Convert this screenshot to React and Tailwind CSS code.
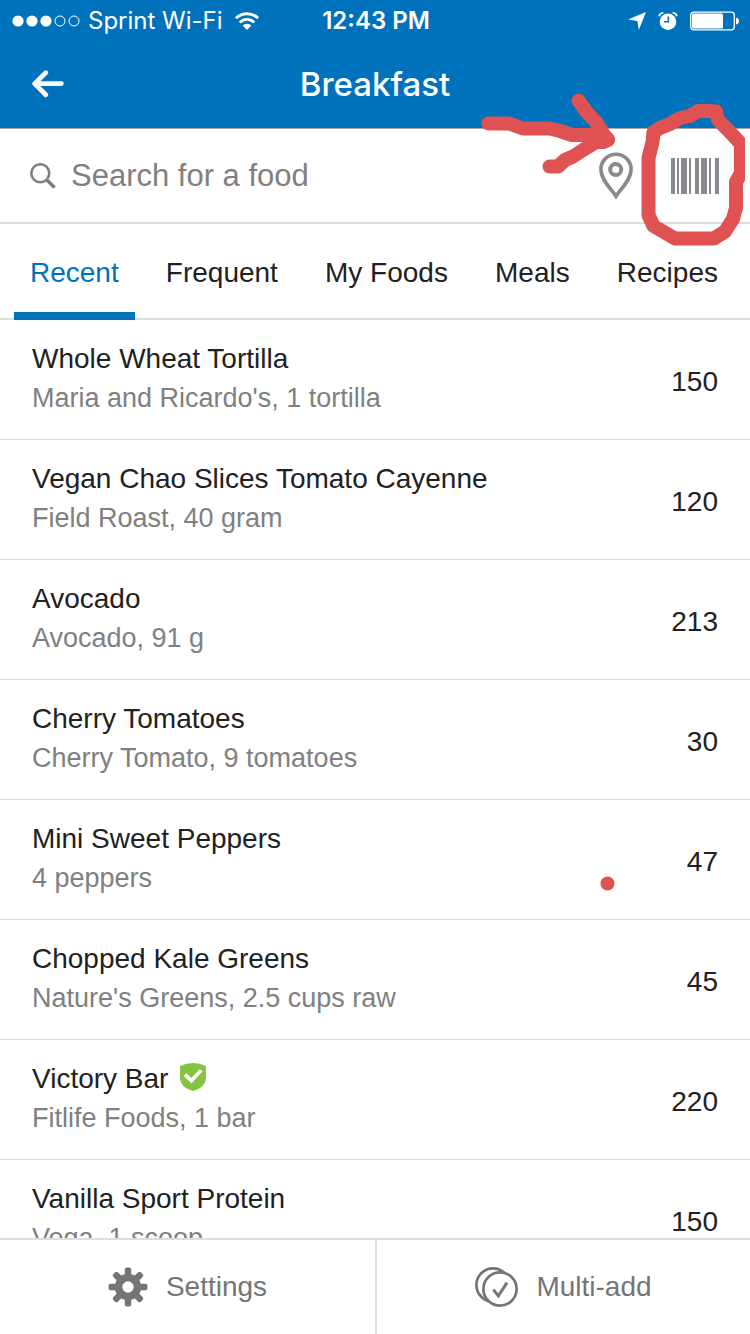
import React, { useState } from "react";
import clsx from "clsx";

const TABS = ["Recent", "Frequent", "My Foods", "Meals", "Recipes"];

const FOODS = [
  { name: "Whole Wheat Tortilla", detail: "Maria and Ricardo's, 1 tortilla", calories: 150 },
  { name: "Vegan Chao Slices Tomato Cayenne", detail: "Field Roast, 40 gram", calories: 120 },
  { name: "Avocado", detail: "Avocado, 91 g", calories: 213 },
  { name: "Cherry Tomatoes", detail: "Cherry Tomato, 9 tomatoes", calories: 30 },
  { name: "Mini Sweet Peppers", detail: "4 peppers", calories: 47 },
  { name: "Chopped Kale Greens", detail: "Nature's Greens, 2.5 cups raw", calories: 45 },
  { name: "Victory Bar", detail: "Fitlife Foods, 1 bar", calories: 220, verified: true },
  { name: "Vanilla Sport Protein", detail: "Vega, 1 scoop", calories: 150 },
];

const SignalDots = () => (
  <svg width="68" height="12" viewBox="0 0 68 12" aria-hidden="true">
    {[0, 1, 2].map((i) => (
      <circle key={i} cx={6 + i * 14} cy="6" r="5.6" fill="#fff" />
    ))}
    {[3, 4].map((i) => (
      <circle key={i} cx={6 + i * 14} cy="6" r="5" fill="none" stroke="#fff" />
    ))}
  </svg>
);

const WifiIcon = () => (
  <svg width="24" height="18" viewBox="0 0 24 18" fill="none" stroke="#fff" aria-hidden="true">
    <path d="M1 6.2a15.6 15.6 0 0 1 22 0" strokeWidth="3" />
    <path d="M4.8 10.4a10.2 10.2 0 0 1 14.4 0" strokeWidth="2.8" />
    <path d="M12 18l-4.4-4.5a6.3 6.3 0 0 1 8.8 0z" fill="#fff" stroke="none" />
  </svg>
);

const LocationIcon = () => (
  <svg width="18" height="18" viewBox="0 0 18 18" fill="#fff" aria-hidden="true">
    <path d="M18 0L10.8 18L9.4 8.9L0 7.6z" />
  </svg>
);

const AlarmIcon = () => (
  <svg width="20" height="18" viewBox="0 0 20 18" aria-hidden="true">
    <circle cx="10" cy="9.7" r="8.3" fill="#fff" />
    <path d="M1 4.2Q2 1 5.4 .8M19 4.2Q18 1 14.6 .8" fill="none" stroke="#fff" strokeWidth="1.6" />
    <path d="M10.3 4.4v5.4H6" fill="none" stroke="#0072bc" strokeWidth="1.6" />
  </svg>
);

const BatteryIcon = () => (
  <svg width="50" height="20" viewBox="0 0 50 20" aria-hidden="true">
    <rect x=".7" y="1.2" width="43.6" height="17.6" rx="3" fill="none" stroke="#fff" strokeWidth="1.3" />
    <rect x="2" y="2.6" width="31" height="14.8" rx="1.5" fill="#fff" />
    <path d="M46 6.6q3 .8 3 3.4t-3 3.4z" fill="#fff" />
  </svg>
);

const BackIcon = () => (
  <svg
    width="32"
    height="28"
    viewBox="0 0 32 28"
    fill="none"
    stroke="#f7f7f7"
    strokeWidth="4.8"
    strokeLinecap="round"
    strokeLinejoin="round"
    aria-hidden="true"
  >
    <path d="M13.7 2.7L2.7 13.6L13.7 24.8M3 13.6h26.4" />
  </svg>
);

const SearchIcon = () => (
  <svg width="26" height="26" viewBox="0 0 26 26" fill="none" stroke="#808080" role="img" aria-label="Search for a food">
    <circle cx="10.3" cy="10.3" r="9" strokeWidth="2.6" />
    <path d="M16.8 17L24.6 24.5" strokeWidth="3.6" />
  </svg>
);

const PinIcon = () => (
  <svg width="34" height="47" viewBox="0 0 34 47" fill="none" stroke="#8a8a8e" aria-hidden="true">
    <path d="M17 44.2C13.4 38 1.9 28.5 1.9 17.3a15.1 15.1 0 0 1 30.2 0C32.1 28.5 20.6 38 17 44.2z" strokeWidth="3.6" />
    <circle cx="16.7" cy="17.5" r="5.5" strokeWidth="4" />
  </svg>
);

// [offset, width] of each bar
const BARS = [[0, 4], [6, 2], [10, 6], [18, 2], [24, 4], [30, 6], [38, 2], [44, 4]];

const BarcodeIcon = () => (
  <svg width="48" height="36" viewBox="0 0 48 36" fill="#8a8a8e" aria-hidden="true">
    {BARS.map(([x, w]) => (
      <rect key={x} x={x} y="0" width={w} height="36" />
    ))}
  </svg>
);

const VerifiedIcon = () => (
  <svg width="26" height="28" viewBox="0 0 26 28" role="img" aria-label="Verified">
    <path d="M0 3Q6.5 0 13 0T26 3V14.5Q26 24 13 28Q0 24 0 14.5z" fill="#85c441" />
    <path d="M5 11.6L11.4 17.6L21.2 7.2" fill="none" stroke="#fff" strokeWidth="3.6" />
  </svg>
);

const GearIcon = () => (
  <svg width="40" height="40" viewBox="-20 -20 40 40" aria-hidden="true">
    {[0, 45, 90, 135].map((deg) => (
      <rect
        key={deg}
        x="-3.2"
        y="-19.5"
        width="6.4"
        height="39"
        rx="2"
        fill="#757575"
        transform={`rotate(${deg})`}
      />
    ))}
    <circle r="13.2" fill="#757575" />
    <circle r="5.7" fill="#fff" />
  </svg>
);

const MultiAddIcon = () => (
  <svg width="43" height="40" viewBox="0 0 43 40" fill="#fff" stroke="#757575" strokeWidth="2.7" aria-hidden="true">
    <circle cx="18" cy="18" r="16.6" />
    <circle cx="25" cy="22" r="16.6" />
    <path d="M18.4 22.6L23.3 29L32 15.6" fill="none" strokeWidth="3" />
  </svg>
);

// red pen marks drawn over the screen
const PenMarks = () => (
  <svg
    className="pointer-events-none absolute top-0 right-[5px] z-10"
    width="275"
    height="900"
    viewBox="470 0 275 900"
    fill="none"
    stroke="#e05252"
    strokeWidth="14"
    strokeLinecap="round"
    strokeLinejoin="round"
    aria-hidden="true"
  >
    <path d="M488.5 123.5H509L523 128.5H550L560 131L572 135H602L608 139" />
    <path d="M578.5 100.500L586.5 112L596 122L601.5 131L608 140L603 142H596L583 150L573 156.5L565 160L558 166.5H549.5" />
    <path d="M601 130L599 136" />
    <path d="M716 111.5L708 111H698L690 116L680 118L670 124L660 128L653.5 132L652.500 142L648.500 158V215L653.500 226L663 231.500L675 238.500H714L725 231.500L733 219L736 208V182L741 173V144L728 130L718 120L716 111.5" />
    <circle cx="607.5" cy="883.5" r="7" fill="#e05252" stroke="none" />
  </svg>
);

const StatusBar = () => (
  <div className="grid h-10 grid-cols-[1fr_auto_1fr] items-center pt-0.5 pr-2.5 pl-3 text-2xl [font-family:Inter,sans-serif]">
    <div className="flex items-center gap-2">
      <SignalDots />
      <span>Sprint Wi-Fi</span>
      <span className="pl-1">
        <WifiIcon />
      </span>
    </div>
    <span className="font-semibold">12:43 PM</span>
    <div className="flex items-center justify-end gap-3">
      <LocationIcon />
      <AlarmIcon />
      <BatteryIcon />
    </div>
  </div>
);

const FoodRow = ({ food }) => (
  <li className="border-b border-[#dcdcdc]">
    <button type="button" className="flex h-[119px] w-full items-center justify-between px-8 text-left">
      <span className="pb-0.5">
        <span className="flex h-10 items-center gap-3 text-[28px] text-[#212121]">
          {food.name}
          {food.verified && (
            <span className="pb-1">
              <VerifiedIcon />
            </span>
          )}
        </span>
        <span className="block h-10 text-[27px] leading-[38px] text-[#808080]">{food.detail}</span>
      </span>
      <span className="pt-1 text-[28px] text-[#212121]">{food.calories}</span>
    </button>
  </li>
);

const App = () => {
  const [activeTab, setActiveTab] = useState("Recent");
  const [search, setSearch] = useState("");

  return (
    <div className="relative flex h-screen flex-col overflow-hidden bg-white [font-family:'Liberation_Sans',Arial,sans-serif]">
      <header className="shrink-0 border-b border-[#a6a6a6] bg-[#0072bc] text-white">
        <StatusBar />
        <div className="grid h-22 grid-cols-[1fr_auto_1fr] items-center px-8">
          <button type="button" aria-label="Back" className="w-fit">
            <BackIcon />
          </button>
          <h1 className="pt-0.5 text-[33px] font-medium [font-family:Inter,sans-serif]">Breakfast</h1>
        </div>
      </header>

      <div className="flex h-[95px] shrink-0 items-center border-b-2 border-[#dedede] pr-[31px] pl-[30px]">
        <label htmlFor="food-search" className="pr-[15px]">
          <SearchIcon />
        </label>
        <input
          id="food-search"
          type="text"
          value={search}
          onChange={(e) => setSearch(e.target.value)}
          placeholder="Search for a food"
          className="h-12 min-w-0 flex-1 text-[31px] text-[#212121] outline-none placeholder:text-[#808080]"
        />
        <div className="flex items-center gap-[38px]">
          <button type="button" aria-label="Nearby places">
            <PinIcon />
          </button>
          <button type="button" aria-label="Scan barcode">
            <BarcodeIcon />
          </button>
        </div>
      </div>

      <nav className="flex h-24 shrink-0 justify-between border-b-2 border-[#dedede] pr-4 pl-[14px]">
        {TABS.map((tab) => (
          <button
            key={tab}
            type="button"
            onClick={() => setActiveTab(tab)}
            className={clsx(
              "-mb-0.5 border-b-8 px-4 pt-2.5 text-[28px]",
              tab === activeTab ? "border-[#0072bc] text-[#0072bc]" : "border-transparent text-[#212121]"
            )}
          >
            {tab}
          </button>
        ))}
      </nav>

      <ul className="min-h-0 flex-1 overflow-hidden">
        {FOODS.map((food) => (
          <FoodRow key={food.name} food={food} />
        ))}
      </ul>

      <footer className="grid h-24 shrink-0 grid-cols-2 border-t-2 border-[#dedede] bg-white text-[28px] text-[#757575]">
        <button type="button" className="flex items-center justify-center gap-[18px]">
          <GearIcon />
          Settings
        </button>
        <button type="button" className="flex items-center justify-center gap-[18px] border-l-2 border-[#dedede]">
          <MultiAddIcon />
          Multi-add
        </button>
      </footer>

      <PenMarks />
    </div>
  );
};

export default App;
